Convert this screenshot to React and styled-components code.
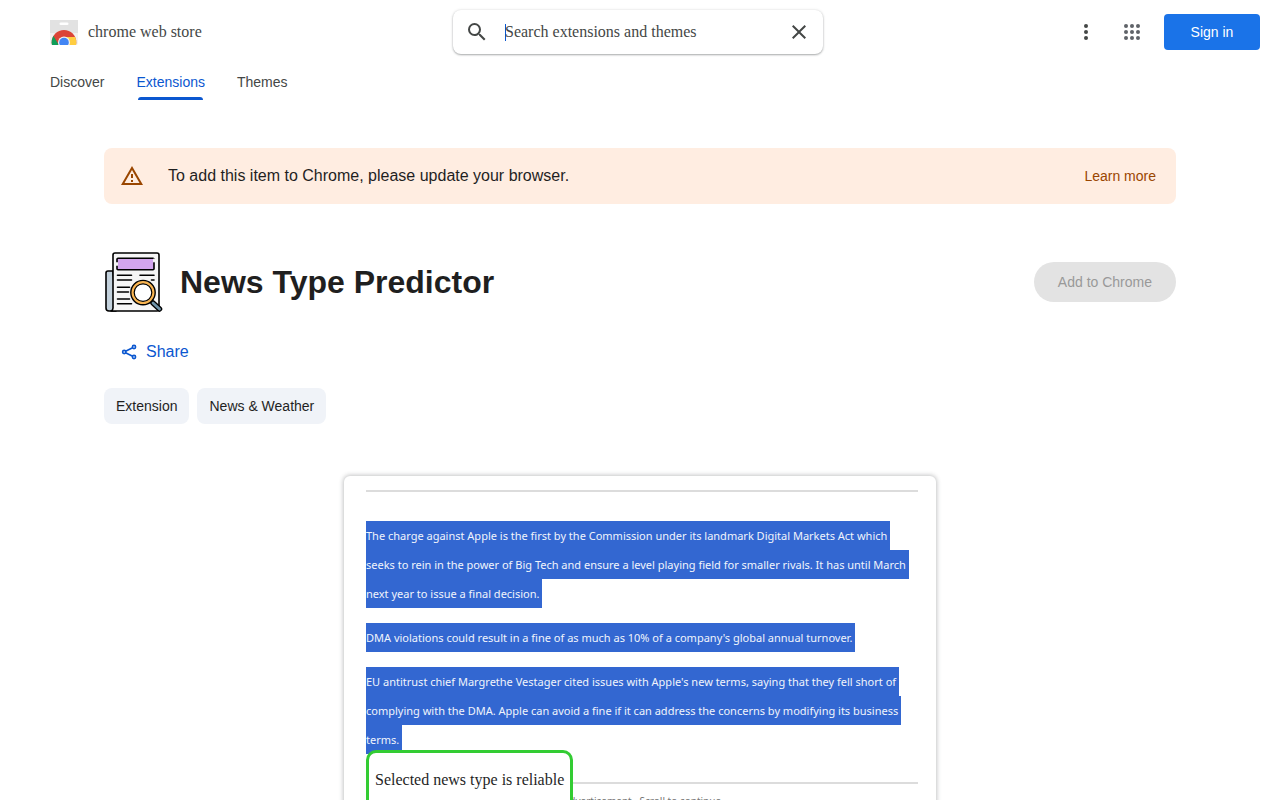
import styled, { createGlobalStyle } from "styled-components";

const tabs = ["Discover", "Extensions", "Themes"];
const categories = ["Extension", "News & Weather"];

const paragraphs = [
	[
		"The charge against Apple is the first by the Commission under its landmark Digital Markets Act which",
		"seeks to rein in the power of Big Tech and ensure a level playing field for smaller rivals. It has until March",
		"next year to issue a final decision.",
	],
	[
		"DMA violations could result in a fine of as much as 10% of a company's global annual turnover.",
	],
	[
		"EU antitrust chief Margrethe Vestager cited issues with Apple's new terms, saying that they fell short of",
		"complying with the DMA. Apple can avoid a fine if it can address the concerns by modifying its business",
		"terms.",
	],
];

function StoreLogo() {
	return (
		<svg width="28" height="26" viewBox="0 0 28 26" aria-hidden="true">
			<defs>
				<clipPath id="bag">
					<path d="M0 1h28v23a2 2 0 0 1-2 2H2a2 2 0 0 1-2-2z" />
				</clipPath>
				<clipPath id="disc">
					<circle cx="14" cy="23.300" r="12.300" />
				</clipPath>
			</defs>
			<g clipPath="url(#bag)">
				<path fill="#f1f1f1" d="M0 0h28v26H0z" />
				<path fill="#e2e2e2" d="M0 0h28v14H0z" />
				<rect x="9.500" y="3.500" width="9" height="2.500" rx="1.250" fill="#fff" />
				<g clipPath="url(#disc)">
					<path fill="#db4437" d="M0 10h28v16H0z" />
					<path fill="#0f9d58" d="M3.500 17 9.500 27H0V17z" />
					<path fill="#ffcd40" d="M14 18h14v9H14z" />
				</g>
				<circle cx="14" cy="23.500" r="6" fill="#f1f1f1" />
				<circle cx="14" cy="23.500" r="4.800" fill="#4285f4" />
			</g>
		</svg>
	);
}

function NewsLogo() {
	return (
		<svg width="60" height="60" viewBox="0 0 60 60" aria-hidden="true">
			<g stroke="#000" strokeWidth="1.600" strokeLinejoin="round" strokeLinecap="round">
				<path fill="#c3d1dc" d="M9 19H4a2 2 0 0 0-2 2v35a3 3 0 0 0 3 3h7z" />
				<path fill="#f6f6f6" d="M11 1h42a2 2 0 0 1 2 2v54a2 2 0 0 1-2 2H7c1.500-.5 2-1.500 2-3V3a2 2 0 0 1 2-2z" />
				<rect x="13" y="6.200" width="37" height="11.500" rx="1" fill="#d3a5ee" />
				<path stroke="#f6f6f6" strokeWidth="2" d="M13 11v2M50 7.500v2" />
				<path fill="none" d="M13.500 23.200h14M36 23.200h14M13.500 28h14M47.500 28h2.500M13.500 35.300h12M13.500 40h11M13.500 47h12M13.500 51.800h14" />
				<path strokeWidth="5.500" d="m49 51 6.500 6" />
				<path stroke="#6f93a8" strokeWidth="2.800" d="m49 51 6.500 6" />
				<circle cx="39" cy="40.600" r="12.200" strokeWidth="1.400" fill="#f9b552" />
				<circle cx="39" cy="40.600" r="8.800" strokeWidth="1.200" fill="#fff" />
			</g>
		</svg>
	);
}

function App() {
	return (
		<>
			<GlobalStyle />

			<Header>
				<Brand href="#">
					<StoreLogo />
					chrome web store
				</Brand>

				<SearchBox role="search">
					<IconButton type="submit" aria-label="Search">
						<Icon viewBox="0 0 24 24">
							<path d="M15.500 14h-.79l-.28-.27A6.471 6.471 0 0 0 16 9.500 6.500 6.500 0 1 0 9.500 16c1.610 0 3.090-.59 4.230-1.570l.27.28v.79l5 4.990L20.490 19l-4.990-5zm-6 0C7.010 14 5 11.990 5 9.500S7.010 5 9.500 5 14 7.010 14 9.500 11.990 14 9.500 14z" />
						</Icon>
					</IconButton>
					<SearchInput
						type="text"
						aria-label="Search extensions and themes"
						placeholder="Search extensions and themes"
					/>
					<IconButton type="button" aria-label="Clear search">
						<Icon viewBox="0 0 24 24">
							<path d="M19 6.410 17.590 5 12 10.590 6.410 5 5 6.410 10.590 12 5 17.590 6.410 19 12 13.410 17.590 19 19 17.590 13.410 12z" />
						</Icon>
					</IconButton>
				</SearchBox>

				<Actions>
					<IconButton type="button" aria-label="More options">
						<Icon viewBox="0 0 24 24">
							{[6, 12, 18].map((y) => (
								<circle key={y} cx="12" cy={y} r="2" />
							))}
						</Icon>
					</IconButton>
					<IconButton type="button" aria-label="Google apps">
						<Icon viewBox="0 0 24 24" $color="#5f6368">
							{[6, 12, 18].map((y) =>
								[6, 12, 18].map((x) => (
									<circle key={`${x}-${y}`} cx={x} cy={y} r="2" />
								))
							)}
						</Icon>
					</IconButton>
					<SignIn href="#">Sign in</SignIn>
				</Actions>
			</Header>

			<Tabs>
				{tabs.map((tab) => (
					<Tab key={tab} href="#" $active={tab === "Extensions"}>
						{tab}
					</Tab>
				))}
			</Tabs>

			<Main>
				<Banner>
					<Icon viewBox="0 0 24 24" $color="#9a4600">
						<path d="M12 5.990 19.530 19H4.470L12 5.990M12 2 1 21h22L12 2zm1 14h-2v2h2v-2zm0-6h-2v4h2v-4z" />
					</Icon>
					<BannerText>
						To add this item to Chrome, please update your browser.
					</BannerText>
					<LearnMore href="#">Learn more</LearnMore>
				</Banner>

				<ItemHeader>
					<NewsLogo />
					<Title>News Type Predictor</Title>
					<AddButton type="button" disabled>
						Add to Chrome
					</AddButton>
				</ItemHeader>

				<ShareButton type="button">
					<svg width="16" height="16" viewBox="0 0 16 16" aria-hidden="true">
						<g fill="none" stroke="currentColor" strokeWidth="1.600">
							<circle cx="13" cy="3" r="1.600" />
							<circle cx="3.200" cy="8" r="1.600" />
							<circle cx="13" cy="13" r="1.600" />
							<path d="m4.600 7.200 7-3.500M4.600 8.800l7 3.500" />
						</g>
					</svg>
					Share
				</ShareButton>

				<Chips>
					{categories.map((category) => (
						<Chip key={category} href="#">
							{category}
						</Chip>
					))}
				</Chips>

				<Preview>
					<Rule />
					<Article>
						{paragraphs.map((lines) => (
							<Paragraph key={lines[0]}>
								{lines.map((line) => (
									<Selected key={line}>{line}</Selected>
								))}
							</Paragraph>
						))}
						<Result>Selected news type is reliable</Result>
					</Article>
					<Rule />
					<AdNote>Advertisement · Scroll to continue</AdNote>
				</Preview>
			</Main>
		</>
	);
}

export default App;

const GlobalStyle = createGlobalStyle`
	* {
		box-sizing: border-box;
	}

	html {
		scrollbar-width: none;
	}

	body {
		margin: 0;
		background: #fff;
		color: #1f1f1f;
		font-family: "Liberation Sans", Arial, sans-serif;
		font-size: 14px;
	}

	a {
		text-decoration: none;
	}

	button {
		font-family: inherit;
		border: 0;
		cursor: pointer;
	}
`;

const Header = styled.header`
	display: grid;
	grid-template-columns: 1fr minmax(0, 370px) 1fr;
	align-items: center;
	height: 64px;
	padding-right: 4px;
`;

const Brand = styled.a`
	display: flex;
	align-items: center;
	gap: 10px;
	padding-left: 50px;
	color: #444746;
	font-family: "Liberation Serif", serif;
	font-size: 16px;
`;

const SearchBox = styled.form`
	display: flex;
	align-items: center;
	height: 44px;
	padding: 0 4px;
	border-radius: 8px;
	background: #fff;
	box-shadow: 0 1px 2px rgba(60, 64, 67, 0.4), 0 0 3px rgba(60, 64, 67, 0.15);
`;

const SearchInput = styled.input`
	flex: 1;
	min-width: 0;
	height: 18px;
	margin-left: 8px;
	padding: 0;
	border: 0;
	outline: none;
	background: linear-gradient(#0b57d0, #0b57d0) left / 1px 17px no-repeat;
	color: #1f1f1f;
	font-family: "Liberation Serif", serif;
	font-size: 16px;

	&::placeholder {
		color: #444746;
		opacity: 1;
	}
`;

const IconButton = styled.button`
	display: flex;
	align-items: center;
	justify-content: center;
	flex-shrink: 0;
	width: 40px;
	height: 40px;
	padding: 0;
	border-radius: 50%;
	background: none;
`;

const Icon = styled.svg`
	flex-shrink: 0;
	width: 24px;
	height: 24px;
	fill: ${({ $color }) => $color || "#444746"};
`;

const Actions = styled.div`
	display: flex;
	align-items: center;
	justify-content: flex-end;
	gap: 6px;
	padding-right: 16px;
`;

const SignIn = styled.a`
	display: flex;
	align-items: center;
	justify-content: center;
	width: 96px;
	height: 36px;
	margin-left: 6px;
	border-radius: 4px;
	background: #1a73e8;
	color: #fff;
`;

const Tabs = styled.nav`
	display: flex;
	gap: 32px;
	height: 36px;
	padding-left: 50px;
`;

const Tab = styled.a`
	display: flex;
	flex-direction: column;
	justify-content: space-between;
	line-height: 36px;
	color: ${({ $active }) => ($active ? "#0b57d0" : "#444746")};

	&::after {
		content: "";
		height: 3px;
		margin: -3px 2px 0;
		border-radius: 3px 3px 0 0;
		background: ${({ $active }) => ($active ? "#0b57d0" : "none")};
	}
`;

const Main = styled.main`
	max-width: 1072px;
	margin: 48px auto 0;
`;

const Banner = styled.div`
	display: flex;
	align-items: center;
	min-height: 56px;
	padding: 0 20px 0 16px;
	border-radius: 8px;
	background: #ffede1;
`;

const BannerText = styled.p`
	flex: 1;
	margin: 0 0 0 24px;
	font-size: 16px;
`;

const LearnMore = styled.a`
	color: #9a4600;
`;

const ItemHeader = styled.section`
	display: flex;
	align-items: center;
	gap: 16px;
	margin-top: 48px;
`;

const Title = styled.h1`
	flex: 1;
	margin: 0;
	font-size: 32px;
	line-height: 40px;
`;

const AddButton = styled.button`
	height: 40px;
	padding: 0 24px;
	border-radius: 20px;
	background: #e3e3e3;
	color: #999;
	font-size: 14px;
	cursor: default;
`;

const ShareButton = styled.button`
	display: flex;
	align-items: center;
	gap: 9px;
	height: 40px;
	margin-top: 20px;
	padding: 0 17px;
	background: none;
	color: #0b57d0;
	font-size: 16px;
`;

const Chips = styled.div`
	display: flex;
	gap: 8px;
	margin-top: 16px;
`;

const Chip = styled.a`
	padding: 0 12px;
	border-radius: 8px;
	background: #f0f3f8;
	color: #1f1f1f;
	line-height: 36px;
`;

const Preview = styled.figure`
	max-width: 592px;
	margin: 52px auto 48px;
	padding: 14px 18px 32px 22px;
	border-radius: 6px;
	background: #fff;
	box-shadow: 0 0 4px 1px rgba(60, 64, 67, 0.3);
`;

const Rule = styled.hr`
	height: 2px;
	margin: 0;
	border: 0;
	background: #dcdcdc;
`;

const Article = styled.div`
	position: relative;
	padding: 29px 0 28px;
	color: #f0f4fc;
	font-family: "Noto Sans", sans-serif;
	font-size: 11px;
	line-height: 29px;
`;

const Paragraph = styled.p`
	display: flex;
	flex-direction: column;
	align-items: flex-start;
	margin: 0;

	& + & {
		margin-top: 15px;
	}
`;

const Selected = styled.span`
	padding-right: 3px;
	background: #3367d1;
	white-space: nowrap;
`;

const Result = styled.div`
	position: absolute;
	top: 258px;
	left: 0;
	padding: 0 6px;
	border: 3px solid #33cc33;
	border-radius: 10px;
	background: #fff;
	color: #1f1f1f;
	font-family: "Liberation Serif", serif;
	font-size: 16px;
	line-height: 54px;
	white-space: nowrap;
`;

const AdNote = styled.figcaption`
	margin-top: 9px;
	color: #777;
	font-family: "Noto Sans", sans-serif;
	font-size: 10px;
	line-height: 16px;
	text-align: center;
`;
